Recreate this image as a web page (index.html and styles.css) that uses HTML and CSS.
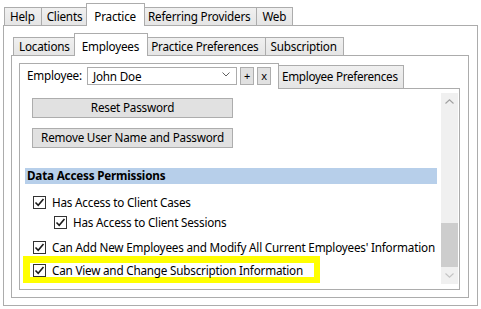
FILE: index.html
```html
<!DOCTYPE html>
<html lang="en">
<head>
    <meta charset="UTF-8">
    <title>Practice - Employees</title>
    <link rel="stylesheet" href="styles.css">
</head>
<body>
    <div class="tabctl outer">
        <div class="tabstrip top">
            <div class="tab">Help</div>
            <div class="tab">Clients</div>
            <div class="tab active">Practice</div>
            <div class="tab">Referring Providers</div>
            <div class="tab">Web</div>
        </div>
        <div class="panel">
            <div class="tabctl">
                <div class="tabstrip">
                    <div class="tab">Locations</div>
                    <div class="tab active">Employees</div>
                    <div class="tab">Practice Preferences</div>
                    <div class="tab">Subscription</div>
                </div>
                <div class="panel">
                    <div class="tabctl">
                        <div class="tabstrip tall">
                            <div class="tab active employee-tab">
                                <span class="label">Employee:</span>
                                <div class="combo">
                                    <span>John Doe</span>
                                    <svg width="8" height="5" viewBox="0 0 8 5"><path d="M0.5 0.5 L4 4 L7.5 0.5" fill="none" stroke="#606060" stroke-width="1"/></svg>
                                </div>
                                <div class="mini-btn">+</div>
                                <div class="mini-btn">x</div>
                            </div>
                            <div class="tab pref">Employee Preferences</div>
                        </div>
                        <div class="panel body">
                            <div class="content">
                                <div class="btn">Reset Password</div>
                                <div class="btn second">Remove User Name and Password</div>

                                <div class="section">Data Access Permissions</div>

                                <div class="check-row">
                                    <span class="box"><svg width="11" height="11" viewBox="0 0 11 11"><path d="M1.5 5.5 L4.2 8.2 L9.5 2" fill="none" stroke="#1a1a1a" stroke-width="1.6"/></svg></span>
                                    Has Access to Client Cases
                                </div>
                                <div class="check-row sub">
                                    <span class="box"><svg width="11" height="11" viewBox="0 0 11 11"><path d="M1.5 5.5 L4.2 8.2 L9.5 2" fill="none" stroke="#1a1a1a" stroke-width="1.6"/></svg></span>
                                    Has Access to Client Sessions
                                </div>
                                <div class="check-row gap">
                                    <span class="box"><svg width="11" height="11" viewBox="0 0 11 11"><path d="M1.5 5.5 L4.2 8.2 L9.5 2" fill="none" stroke="#1a1a1a" stroke-width="1.6"/></svg></span>
                                    Can Add New Employees and Modify All Current Employees' Information
                                </div>
                                <div class="highlight">
                                    <div class="check-row">
                                        <span class="box"><svg width="11" height="11" viewBox="0 0 11 11"><path d="M1.5 5.5 L4.2 8.2 L9.5 2" fill="none" stroke="#1a1a1a" stroke-width="1.6"/></svg></span>
                                        Can View and Change Subscription Information
                                    </div>
                                </div>
                            </div>
                            <div class="vscroll">
                                <div class="arrow"><svg width="9" height="5" viewBox="0 0 9 5"><path d="M0.5 4.5 L4.5 0.8 L8.5 4.5" fill="none" stroke="#a0a0a0" stroke-width="1.1"/></svg></div>
                                <div class="track"></div>
                                <div class="thumb"></div>
                                <div class="arrow"><svg width="9" height="5" viewBox="0 0 9 5"><path d="M0.5 0.5 L4.5 4.2 L8.5 0.5" fill="none" stroke="#c4c4c4" stroke-width="1.1"/></svg></div>
                            </div>
                        </div>
                    </div>
                </div>
            </div>
        </div>
    </div>
</body>
</html>
```

FILE: styles.css
```css
*{
    margin:0px;
    padding:0px;
    box-sizing: border-box;
}
body{
    font-family: "Noto Sans", "Open Sans", sans-serif;
    font-size: 11.7px;
    letter-spacing: -0.2px;
    color: #000;
    background-color: #fff;
}

/* tab controls */
.tabctl{
    display: flex;
    flex-direction: column;
    flex: 1;
}
.outer{
    margin: 3px 0 0 3px;
    width: 475px;
    height: 303px;
    flex: none;
}
.tabstrip{
    display: flex;
    align-items: flex-end;
    height: 22px;
    padding-left: 2px;
}
.tabstrip.top{
    padding-left: 1px;
}
.tab{
    height: 18px;
    border: 1px solid #acacac;
    border-bottom: none;
    margin-right: -1px;
    padding: 0 6px 0 5px;
    line-height: 16px;
    white-space: nowrap;
    background: linear-gradient(#f0f0f0, #e5e5e5);
}
.tab.active{
    height: 23px;
    margin: 0 -3px -1px -2px;
    padding: 4px 8px 1px 7px;
    background: #fff;
    z-index: 1;
}
.panel{
    flex: 1;
    display: flex;
    flex-direction: column;
    border: 1px solid #acacac;
    background-color: #fff;
    padding: 7px 8px 7px 7px;
}

/* employee tab strip */
.tabstrip.tall{
    height: 25px;
}
.tabstrip.tall .tab{
    height: 23px;
    line-height: 21px;
}
.tabstrip.tall .pref{
    padding: 0 5px 0 5px;
    letter-spacing: -0.3px;
}
.tabstrip.tall .employee-tab{
    height: 26px;
    display: flex;
    align-items: flex-start;
    padding: 2px 7px 0 7px;
    line-height: normal;
}
.label{
    line-height: 17px;
    margin-top: 1px;
    margin-right: 5px;
}
.combo{
    width: 150px;
    height: 18px;
    border: 1px solid #acacac;
    background: #fff;
    display: flex;
    align-items: center;
    justify-content: space-between;
    padding: 0 6px 0 5px;
    margin-top: 1px;
}
.combo svg{
    margin-bottom: 4px;
}
.mini-btn{
    width: 14px;
    height: 18px;
    border: 1px solid #adadad;
    background: #e1e1e1;
    text-align: center;
    line-height: 15px;
    font-size: 11px;
    margin-left: 3px;
    margin-top: 1px;
}

/* employee body */
.panel.body{
    flex-direction: row;
    padding: 4px 1px 5px 3px;
}
.content{
    flex: 1;
    padding-top: 5px;
}
.btn{
    width: 201px;
    height: 20px;
    margin-left: 9px;
    border: 1px solid #adadad;
    background-color: #e1e1e1;
    text-align: center;
    line-height: 17px;
}
.btn.second{
    margin-top: 10px;
}
.section{
    margin: 20px 4px 9px 2px;
    height: 16px;
    line-height: 15px;
    padding-left: 2px;
    font-weight: bold;
    background-color: #b7cfea;
}
.check-row{
    display: flex;
    align-items: center;
    height: 18px;
    padding-left: 10px;
    white-space: nowrap;
}
.check-row.sub{
    margin-top: 2px;
    padding-left: 31px;
}
.check-row.gap{
    margin-top: 7px;
}
.box{
    width: 13px;
    height: 13px;
    border: 1px solid #333;
    background: #fff;
    margin-right: 6px;
    display: flex;
    align-items: center;
    justify-content: center;
}
.highlight{
    margin-top: 0px;
    width: 297px;
    border-style: solid;
    border-color: #ffff00;
    border-width: 7px 6px 6px 7px;
    background: #fff;
}
.highlight .check-row{
    height: 14px;
    padding-left: 3px;
}

/* scrollbar */
.vscroll{
    width: 17px;
    display: flex;
    flex-direction: column;
    background-color: #f0f0f0;
}
.arrow{
    height: 17px;
    display: flex;
    align-items: center;
    justify-content: center;
}
.track{
    flex: 1;
}
.thumb{
    height: 44px;
    background-color: #cdcdcd;
}
```
